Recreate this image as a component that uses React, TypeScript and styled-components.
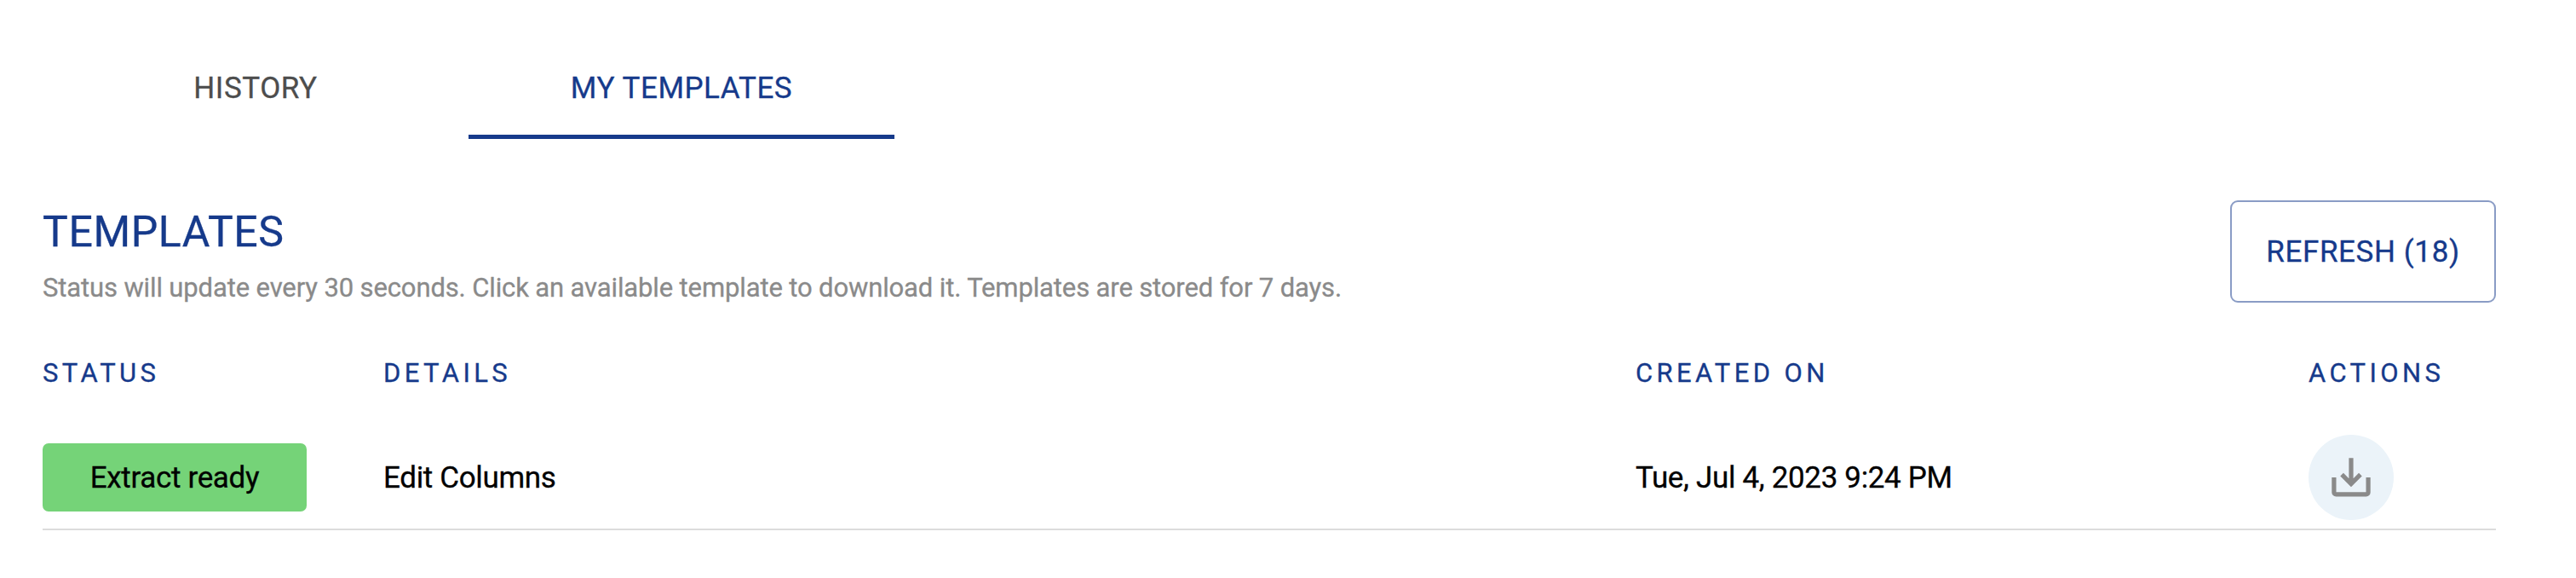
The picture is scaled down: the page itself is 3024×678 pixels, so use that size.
import React from "react";
import styled, { createGlobalStyle } from "styled-components";

const navy = "#163a8b";

const Global = createGlobalStyle`
  * { box-sizing: border-box; }
  body { margin: 0; background: #fff; font-family: Roboto, "Liberation Sans", sans-serif; color: #000; -webkit-text-stroke: 0.3px; }
`;
const Page = styled.main`height: 678px; padding: 42px 94px 0 50px; overflow: hidden;`;
const Tabs = styled.nav`display: flex;`;
const Tab = styled.button<{ $active?: boolean }>`
  width: 500px; height: 121px; padding: 6px 0 0; border: 0; background: none;
  border-bottom: 5px solid ${p => (p.$active ? navy : "transparent")};
  color: ${p => (p.$active ? navy : "#4d4d4d")};
  font: 400 35px Roboto, sans-serif; letter-spacing: 0.54px;
`;
const Header = styled.header`display: flex; justify-content: space-between; margin-top: 72px; height: 120px;`;
const Title = styled.h1`margin: 8px 0 0; font-size: 50px; line-height: 58px; font-weight: 400; letter-spacing: 0.6px; color: ${navy};`;
const Note = styled.p`margin: 19px 0 0; font-size: 31px; line-height: 36px; letter-spacing: -0.13px; color: #8a8a8a;`;
const Refresh = styled.button`
  width: 312px; height: 120px; padding: 0; border: 2px solid #8a9cc5; border-radius: 9px; background: #fff;
  color: ${navy}; font: 400 35px Roboto, sans-serif; letter-spacing: 0.6px;
`;
const Row = styled.div`display: grid; grid-template-columns: 400px 1470px 790px 220px; align-items: center;`;
const HeadRow = styled(Row)`margin-top: 59px; height: 46px; color: ${navy}; font-size: 31px; letter-spacing: 4.4px;`;
const BodyRow = styled(Row)`margin-top: 40px; height: 122px; font-size: 35px; letter-spacing: -0.34px; border-bottom: 2px solid #dcdcdc;`;
const Badge = styled.span`
  display: flex; align-items: center; justify-content: center; width: 310px; height: 80px;
  border-radius: 7px; background: #75d378;
`;
const Download = styled.button`
  width: 100px; height: 100px; border: 0; border-radius: 50%; background: #ebf3f9; padding: 0;
  display: flex; align-items: center; justify-content: center;
`;

export default function App() {
  return (
    <Page>
      <Global />
      <Tabs><Tab>HISTORY</Tab><Tab $active>MY TEMPLATES</Tab></Tabs>
      <Header>
        <div>
          <Title>TEMPLATES</Title>
          <Note>Status will update every 30 seconds. Click an available template to download it. Templates are stored for 7 days.</Note>
        </div>
        <Refresh>REFRESH (18)</Refresh>
      </Header>
      <HeadRow><span>STATUS</span><span>DETAILS</span><span>CREATED ON</span><span>ACTIONS</span></HeadRow>
      <BodyRow>
        <Badge>Extract ready</Badge><span>Edit Columns</span><span>Tue, Jul 4, 2023 9:24 PM</span>
        <Download aria-label="Download">
          <svg width="50" height="50" viewBox="0 0 50 50" fill="none" stroke="#8a8a8a" strokeWidth="5.2">
            <path d="M25 2.3v29M14.1 21.6 25 32.5l10.9-10.9M4.9 25v17.4a2.4 2.4 0 0 0 2.4 2.4h35.4a2.4 2.4 0 0 0 2.4-2.4V25" />
          </svg>
        </Download>
      </BodyRow>
    </Page>
  );
}
